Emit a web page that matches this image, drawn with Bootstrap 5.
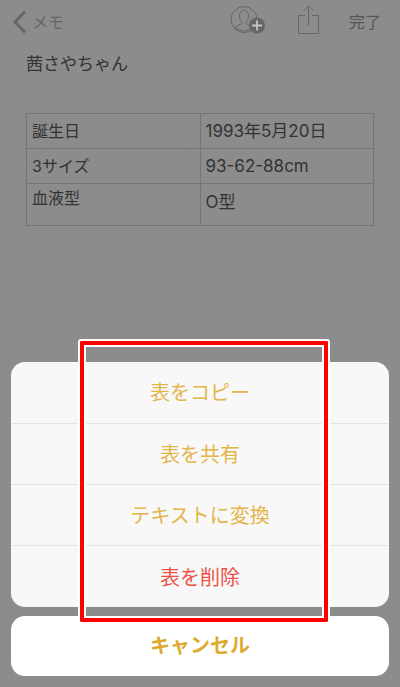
<!DOCTYPE html>
<html lang="ja">
<head>
<meta charset="utf-8">
<title>メモ</title>
<link href="https://cdn.jsdelivr.net/npm/bootstrap@5.3.0/dist/css/bootstrap.min.css" rel="stylesheet">
<style>
html,body{height:687px;overflow:hidden}
body{background:#8c8c8c;font-family:"Inter","Noto Sans CJK JP",sans-serif;color:#333}
.page-shell{height:687px;position:relative;isolation:isolate}
.paper-grain{position:absolute;inset:0;width:400px;height:687px;z-index:-1}
.note-bar{height:46px;padding:0 19px 0 12px;color:#666}
.note-back{font-size:16px;color:#666;gap:5px;margin-top:-3px}
.note-done{font-size:16px;color:#555;margin-left:30px;margin-top:-3px;line-height:20px}
.note-share{margin-left:32px;margin-top:-6px}
.note-person{margin-top:-7px}
.note-title{font-size:17px;line-height:24px;margin:6px 0 0 26px;color:#333}
.note-table{width:348px;margin:37px 0 0 26px;border-collapse:collapse;table-layout:fixed;font-size:16px;color:#333}
.note-table td{border:1px solid #757575;padding:0 5px;line-height:22px;height:35px;vertical-align:middle;background:transparent}
.note-table td+td{font-size:17px}
.note-table tr:last-child td{height:42px;vertical-align:top;padding-top:3px}
.note-table tr:last-child td+td{padding-top:7px}
.sheet-wrap{margin-top:auto;padding:0 11px 11px}
.sheet-group{background:#f8f8f8;border-radius:14px;margin-bottom:9px;overflow:hidden}
.sheet-row{height:61px;font-size:20px;color:#e3b64a;background:transparent;border:0;border-bottom:1px solid #e4e4e4;width:100%;display:flex;align-items:center;justify-content:center;padding:1px 0 0}
.sheet-row:first-child{height:62px}
.sheet-row:last-child{border-bottom:0;padding-top:2px}
.sheet-row.sheet-danger{color:#ef5048}
.sheet-cancel{height:60px;background:#fff;border-radius:14px;font-size:20px;font-weight:700;color:#dcaa2c;border:0;width:100%;display:block;padding:0}
.mark-box{position:absolute;left:80px;top:341px;width:248px;height:281px;border:4px solid #f00;outline:2px solid #fff;box-shadow:inset 0 0 0 2px #fff;border-radius:1px}
</style>
</head>
<body>
<div class="page-shell d-flex flex-column">
  <svg class="paper-grain" aria-hidden="true">
    <filter id="grainf"><feTurbulence type="fractalNoise" baseFrequency="0.3" numOctaves="3" seed="4"/><feColorMatrix values="0 0 0 0 0.25 0 0 0 0 0.25 0 0 0 0 0.25 0.25 0.25 0 0 -0.2"/></filter>
    <rect width="400" height="687" filter="url(#grainf)"/>
  </svg>
  <div class="note-bar d-flex align-items-center justify-content-between">
    <div class="note-back d-flex align-items-center">
      <svg width="15" height="24" viewBox="0 0 15 24"><path d="M13 1.500 3 12 13 22.500" fill="none" stroke="#666" stroke-width="3"/></svg>
      <span>メモ</span>
    </div>
    <div class="d-flex align-items-center">
      <svg class="note-person" width="36" height="28" viewBox="0 0 36 28">
        <circle cx="14" cy="13.500" r="13" fill="none" stroke="#666" stroke-width="1"/>
        <path d="M14 4.500c-3 0-4.500 2.400-4.500 5.500 0 2.500 1 4.500 2.300 5.500v1.500c0 1.500-5 2-6.800 4.500a13 13 0 0 0 17.500 0c-1-1.500-6.300-3-6.300-4.500v-1.500c1.300-1 2.300-3 2.300-5.500 0-3.100-1.500-5.500-4.500-5.500z" fill="none" stroke="#666" stroke-width="1"/>
        <circle cx="27" cy="19.500" r="8" fill="#666"/>
        <path d="M27 14.500v10M22 19.500h10" stroke="#c4c4c4" stroke-width="1.800"/>
      </svg>
      <svg class="note-share" width="21" height="30" viewBox="0 0 21 30">
        <path d="M7 10.500H.5v18h20v-18H14" fill="none" stroke="#666" stroke-width="1"/>
        <path d="M10.500 21V1.500M6 5.500 10.500 1 15 5.500" fill="none" stroke="#666" stroke-width="1"/>
      </svg>
      <span class="note-done">完了</span>
    </div>
  </div>
  <div class="note-title">茜さやちゃん</div>
  <table class="note-table">
    <tr><td>誕生日</td><td>1993年5月20日</td></tr>
    <tr><td>3サイズ</td><td>93-62-88cm</td></tr>
    <tr><td>血液型</td><td>O型</td></tr>
  </table>
  <div class="sheet-wrap">
    <div class="sheet-group">
      <button class="sheet-row">表をコピー</button>
      <button class="sheet-row">表を共有</button>
      <button class="sheet-row">テキストに変換</button>
      <button class="sheet-row sheet-danger">表を削除</button>
    </div>
    <button class="sheet-cancel">キャンセル</button>
  </div>
  <div class="mark-box"></div>
</div>
<script src="https://cdn.jsdelivr.net/npm/bootstrap@5.3.0/dist/js/bootstrap.bundle.min.js"></script>
</body>
</html>
